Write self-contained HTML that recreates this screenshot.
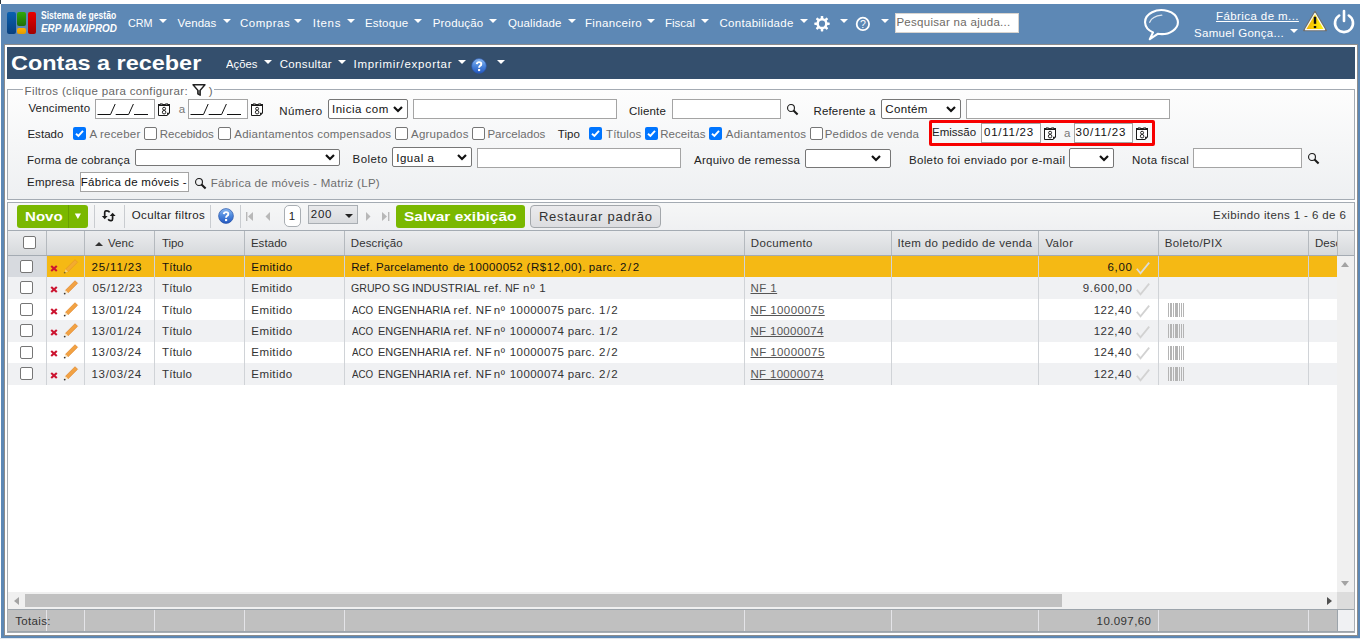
<!DOCTYPE html>
<html><head><meta charset="utf-8">
<style>
*{box-sizing:border-box}
html,body{margin:0;padding:0}
body{width:1360px;height:639px;overflow:hidden;position:relative;background:#fff;font-family:"Liberation Sans",sans-serif;font-size:12px;color:#222}
.a{position:absolute}
.t{position:absolute;white-space:nowrap}
.tri{position:absolute;width:0;height:0;border-left:4px solid transparent;border-right:4px solid transparent;border-top:4px solid #fff}
.inp{position:absolute;background:#fff;border:1px solid #a4a4a4}
.sel{position:absolute;background:#fff;border:1px solid #767676;border-radius:2px}
.cb{position:absolute;width:13px;height:13px;border:1px solid #767676;border-radius:2px;background:#fff}
.sep{position:absolute;width:1px;background:#c9ccd0}
</style></head><body>
<svg width="0" height="0" style="position:absolute"><defs>
<symbol id="cal" viewBox="0 0 12 13"><path d="M0.5 1.5 V12.5 H9.2 L11.5 10 V1.5" fill="#fff" stroke="#1a1a1a" stroke-width="1"/><rect x="0" y="1" width="12" height="2" fill="#1a1a1a"/><circle cx="3.4" cy="1" r="0.9" fill="#fff" stroke="#1a1a1a" stroke-width="0.8"/><circle cx="8.6" cy="1" r="0.9" fill="#fff" stroke="#1a1a1a" stroke-width="0.8"/><path d="M9 12.6 L9 9.8 L11.8 9.8 Z" fill="#1a1a1a"/><ellipse cx="6.1" cy="5.7" rx="1.5" ry="1.45" fill="none" stroke="#1a1a1a" stroke-width="0.95"/><ellipse cx="6.1" cy="9.2" rx="1.75" ry="1.75" fill="none" stroke="#1a1a1a" stroke-width="0.95"/></symbol>
<symbol id="mag" viewBox="0 0 12 12"><circle cx="4" cy="4" r="3.45" fill="none" stroke="#1a1a1a" stroke-width="1.1"/><line x1="6.5" y1="6.5" x2="10.6" y2="10.4" stroke="#1a1a1a" stroke-width="2.1"/></symbol>
<symbol id="chk" viewBox="0 0 13 13"><rect width="13" height="13" rx="2" fill="#0075ff"/><path d="M3 6.8 L5.4 9 L10 3.8" fill="none" stroke="#fff" stroke-width="1.9"/></symbol>
</defs></svg>
<div class="a" style="left:0;top:0;width:1px;height:4px;background:#2b3a44"></div>
<div class="a" style="left:1px;top:4px;width:1359px;height:635px;background:#5d88b5"></div>
<div class="a" style="left:0;top:638px;width:1360px;height:1px;background:#dfe6ee"></div>
<div class="a" style="left:7px;top:12px;width:8.7px;height:21.6px;border-radius:2px;background:linear-gradient(#0a60b0,#08407e)"></div>
<div class="a" style="left:17.1px;top:12px;width:8.7px;height:13.8px;border-radius:2px;background:linear-gradient(#30a80a,#1f6e08)"></div>
<div class="a" style="left:17.1px;top:27.7px;width:8.7px;height:5.9px;border-radius:2px;background:linear-gradient(#ffb000,#e09a00)"></div>
<div class="a" style="left:27.5px;top:12px;width:8.7px;height:21.6px;border-radius:2px;background:linear-gradient(#e80000,#a00000)"></div>
<div class="t" style="left:41.00px;top:9.00px;font-size:10.5px;line-height:13px;color:#fff;letter-spacing:0.000px;font-weight:700;transform:scaleX(0.8152);transform-origin:0 0">Sistema de gestão</div>
<div class="t" style="left:41.00px;top:20.90px;font-size:11.5px;line-height:14px;color:#fff;letter-spacing:0.000px;font-weight:700;font-style:italic;transform:scaleX(0.8580);transform-origin:0 0">ERP MAXIPROD</div>
<div class="t" style="left:128.46px;top:15.90px;font-size:11.5px;line-height:14px;color:#fff;letter-spacing:0.000px;transform:scaleX(0.9375);transform-origin:0 0">CRM</div>
<div class="tri" style="left:159px;top:19px"></div>
<div class="t" style="left:177.50px;top:15.90px;font-size:11.5px;line-height:14px;color:#fff;letter-spacing:0.100px">Vendas</div>
<div class="tri" style="left:222.5px;top:19px"></div>
<div class="t" style="left:240.00px;top:15.90px;font-size:11.5px;line-height:14px;color:#fff;letter-spacing:0.500px">Compras</div>
<div class="tri" style="left:294px;top:19px"></div>
<div class="t" style="left:312.75px;top:15.90px;font-size:11.5px;line-height:14px;color:#fff;letter-spacing:0.688px">Itens</div>
<div class="tri" style="left:347px;top:19px"></div>
<div class="t" style="left:365.00px;top:15.90px;font-size:11.5px;line-height:14px;color:#fff;letter-spacing:0.167px">Estoque</div>
<div class="tri" style="left:414px;top:19px"></div>
<div class="t" style="left:432.80px;top:15.90px;font-size:11.5px;line-height:14px;color:#fff;letter-spacing:0.157px">Produção</div>
<div class="tri" style="left:489px;top:19px"></div>
<div class="t" style="left:508.00px;top:15.90px;font-size:11.5px;line-height:14px;color:#fff;letter-spacing:0.125px">Qualidade</div>
<div class="tri" style="left:568px;top:19px"></div>
<div class="t" style="left:585.00px;top:15.90px;font-size:11.5px;line-height:14px;color:#fff;letter-spacing:0.333px">Financeiro</div>
<div class="tri" style="left:647px;top:19px"></div>
<div class="t" style="left:665.00px;top:15.90px;font-size:11.5px;line-height:14px;color:#fff;letter-spacing:0.000px">Fiscal</div>
<div class="tri" style="left:701px;top:19px"></div>
<div class="t" style="left:719.50px;top:15.90px;font-size:11.5px;line-height:14px;color:#fff;letter-spacing:0.292px">Contabilidade</div>
<div class="tri" style="left:800px;top:19px"></div>
<svg class="a" style="left:814px;top:16px" width="16" height="16" viewBox="0 0 16 16">
    <g fill="#fff"><circle cx="8" cy="7.7" r="5.6"/>
    <rect x="6.75" y="0" width="2.5" height="15.4" rx="0.6"/>
    <rect x="6.75" y="0" width="2.5" height="15.4" rx="0.6" transform="rotate(45 8 7.7)"/>
    <rect x="6.75" y="0" width="2.5" height="15.4" rx="0.6" transform="rotate(90 8 7.7)"/>
    <rect x="6.75" y="0" width="2.5" height="15.4" rx="0.6" transform="rotate(135 8 7.7)"/></g>
    <circle cx="8" cy="7.7" r="3.1" fill="#5d88b5"/></svg>
<div class="tri" style="left:840px;top:19px"></div>
<svg class="a" style="left:855px;top:16px" width="16" height="16" viewBox="0 0 16 16">
    <circle cx="7.9" cy="7.9" r="6.2" fill="none" stroke="#fff" stroke-width="1.8"/>
    <text x="7.9" y="11.8" font-size="10.5" font-family="Liberation Sans" text-anchor="middle" fill="#fff">?</text></svg>
<div class="tri" style="left:881px;top:19px"></div>
<div class="a" style="left:895px;top:13px;width:124px;height:20px;background:#fff;border:1px solid #d8d4cf"></div>
<div class="t" style="left:896.40px;top:15.40px;font-size:11.5px;line-height:14px;color:#6e6a66;letter-spacing:0.290px">Pesquisar na ajuda...</div>
<svg class="a" style="left:1142px;top:8px" width="40" height="34" viewBox="0 0 40 34">
    <path d="M11 24.4 L7.8 31.2 L15.7 25.8 A16.4 12 0 1 0 11 24.4 Z" fill="none" stroke="#fff" stroke-width="2.1" stroke-linejoin="round"/>
    <path d="M7.7 14.3 Q10 8.2 19.8 7.2" fill="none" stroke="#fff" stroke-width="1.3" stroke-linecap="round" opacity="0.8"/></svg>
<div class="t" style="left:1216.00px;top:8.90px;font-size:11.5px;line-height:14px;color:#fff;letter-spacing:0.414px;text-decoration:underline">Fábrica de m...</div>
<div class="t" style="left:1194.00px;top:25.50px;font-size:11.5px;line-height:14px;color:#fff;letter-spacing:0.286px">Samuel Gonça...</div>
<div class="tri" style="left:1290px;top:29px"></div>
<svg class="a" style="left:1302px;top:10px" width="26" height="22" viewBox="0 0 26 22">
    <defs><linearGradient id="wg" x1="0" y1="0" x2="1" y2="0"><stop offset="0" stop-color="#f2a900"/><stop offset="1" stop-color="#ffff10"/></linearGradient></defs>
    <path d="M13 1.6 L24.3 20.6 L1.7 20.6 Z" fill="url(#wg)" stroke="#6f6f6f" stroke-width="1.5" stroke-linejoin="round"/>
    <path d="M13 3.4 L22.6 19.6 L3.4 19.6 Z" fill="none" stroke="#fff" stroke-width="1.1" stroke-linejoin="round" opacity="0.9"/>
    <rect x="11.8" y="6.8" width="2.4" height="7" fill="#111"/>
    <rect x="11.8" y="16" width="2.4" height="2.1" fill="#111"/></svg>
<svg class="a" style="left:1332px;top:9px" width="24" height="25" viewBox="0 0 24 25">
    <path d="M7.2 6.5 A9 9 0 1 0 16.8 6.5" fill="none" stroke="#fff" stroke-width="2.6" stroke-linecap="round"/>
    <line x1="12" y1="2" x2="12" y2="12" stroke="#fff" stroke-width="2.6" stroke-linecap="round"/></svg>
<div class="a" style="left:4px;top:44px;width:1354px;height:592px;background:#fff;border:1px solid #8d8d8d"></div>
<div class="a" style="left:7px;top:47px;width:1348px;height:32px;background:#344f6d"></div>
<div class="t" style="left:11.18px;top:49.90px;font-size:21px;line-height:25px;color:#fff;letter-spacing:0.000px;font-weight:700;transform:scaleX(1.1166);transform-origin:0 0">Contas a receber</div>
<div class="t" style="left:226.20px;top:56.60px;font-size:11.5px;line-height:14px;color:#fff;letter-spacing:0.000px;transform:scaleX(0.9781);transform-origin:0 0">Ações</div>
<div class="tri" style="left:264px;top:60px"></div>
<div class="t" style="left:279.70px;top:56.60px;font-size:11.5px;line-height:14px;color:#fff;letter-spacing:0.337px">Consultar</div>
<div class="tri" style="left:338px;top:60px"></div>
<div class="t" style="left:353.60px;top:56.60px;font-size:11.5px;line-height:14px;color:#fff;letter-spacing:0.688px">Imprimir/exportar</div>
<div class="tri" style="left:458px;top:60px"></div>
<svg class="a" style="left:471px;top:58px" width="16" height="16" viewBox="0 0 16 16">
  <defs><linearGradient id="hb" x1="0" y1="0" x2="0" y2="1"><stop offset="0" stop-color="#8cbaf2"/><stop offset="0.5" stop-color="#4a86dc"/><stop offset="1" stop-color="#2458c0"/></linearGradient></defs>
  <circle cx="8" cy="8" r="7.4" fill="url(#hb)" stroke="#2a55a8" stroke-width="0.7"/>
  <path d="M5.8 6.1 Q5.9 4.1 8.1 4.1 Q10.3 4.1 10.3 5.9 Q10.3 7.2 9.1 7.8 Q8.1 8.4 8.1 9.8" fill="none" stroke="#fff" stroke-width="1.9"/>
  <rect x="7.05" y="11" width="2.1" height="2.1" fill="#fff"/></svg>
<div class="tri" style="left:497px;top:60px"></div>
<div class="a" style="left:7px;top:89px;width:1348px;height:111px;border:1px solid #a4abb3;background:linear-gradient(#fdfdfd,#eef0f2)"></div>
<div class="a" style="left:23px;top:84px;width:191px;height:12px;background:#fff"></div>
<div class="t" style="left:24.60px;top:83.70px;font-size:11.5px;line-height:14px;color:#666;letter-spacing:0.352px">Filtros (clique para configurar:</div>
<svg class="a" style="left:192px;top:84px" width="14" height="12" viewBox="0 0 14 12">
  <path d="M5.8 6.2 L8.2 6.2 L8.2 11.2 L5.8 10.2 Z" fill="#808080"/><path d="M1 0.8 L13 0.8 L8.2 6.2 L8.2 11.2 L5.8 9.8 L5.8 6.2 Z" fill="none" stroke="#222" stroke-width="1.4" stroke-linejoin="round"/></svg>
<div class="t" style="left:208.70px;top:83.70px;font-size:11.5px;line-height:14px;color:#666;letter-spacing:0.000px">)</div>
<div class="t" style="left:28.40px;top:101.40px;font-size:11.5px;line-height:14px;color:#222;letter-spacing:0.178px">Vencimento</div>
<div class="inp" style="left:95px;top:99px;width:60px;height:20px"></div>
<svg class="a" style="left:97.0px;top:103px" width="52" height="13" viewBox="0 0 52 13"><path d="M0.5 11.5 H13.5 L18.2 1 M18.7 11.5 H31.6 L36.4 1 M37 11.5 H51" fill="none" stroke="#111" stroke-width="1"/></svg>
<svg class="a" style="left:158px;top:103px" width="12" height="13"><use href="#cal"/></svg>
<div class="t" style="left:178.80px;top:102.00px;font-size:11.5px;line-height:14px;color:#777;letter-spacing:0.000px">a</div>
<div class="inp" style="left:188px;top:99px;width:60px;height:20px"></div>
<svg class="a" style="left:190.0px;top:103px" width="52" height="13" viewBox="0 0 52 13"><path d="M0.5 11.5 H13.5 L18.2 1 M18.7 11.5 H31.6 L36.4 1 M37 11.5 H51" fill="none" stroke="#111" stroke-width="1"/></svg>
<svg class="a" style="left:251px;top:103px" width="12" height="13"><use href="#cal"/></svg>
<div class="t" style="left:279.30px;top:104.40px;font-size:11.5px;line-height:14px;color:#222;letter-spacing:0.380px">Número</div>
<div class="sel" style="left:328px;top:99px;width:80px;height:20px"></div>
<svg class="a" style="left:393px;top:106px" width="10" height="7" viewBox="0 0 10 7"><path d="M1 1 L5 5 L9 1" fill="none" stroke="#111" stroke-width="2.2"/></svg>
<div class="t" style="left:332.00px;top:101.90px;font-size:11.5px;line-height:14px;color:#111;letter-spacing:0.500px">Inicia com</div>
<div class="inp" style="left:413px;top:99px;width:204px;height:20px"></div>
<div class="t" style="left:629.00px;top:104.40px;font-size:11.5px;line-height:14px;color:#222;letter-spacing:0.167px">Cliente</div>
<div class="inp" style="left:672px;top:99px;width:109px;height:20px"></div>
<svg class="a" style="left:787px;top:104px" width="12" height="12"><use href="#mag"/></svg>
<div class="t" style="left:813.40px;top:104.40px;font-size:11.5px;line-height:14px;color:#222;letter-spacing:0.190px">Referente a</div>
<div class="sel" style="left:881px;top:99px;width:80px;height:20px"></div>
<svg class="a" style="left:946px;top:106px" width="10" height="7" viewBox="0 0 10 7"><path d="M1 1 L5 5 L9 1" fill="none" stroke="#111" stroke-width="2.2"/></svg>
<div class="t" style="left:885.30px;top:101.90px;font-size:11.5px;line-height:14px;color:#111;letter-spacing:0.340px">Contém</div>
<div class="inp" style="left:966px;top:99px;width:204px;height:20px"></div>
<div class="t" style="left:27.40px;top:126.60px;font-size:11.5px;line-height:14px;color:#222;letter-spacing:0.040px">Estado</div>
<svg class="a" style="left:73px;top:127px" width="13" height="13"><use href="#chk"/></svg>
<div class="t" style="left:89.40px;top:126.60px;font-size:11.5px;line-height:14px;color:#6d6d6d;letter-spacing:0.200px">A receber</div>
<div class="cb" style="left:144px;top:127px"></div>
<div class="t" style="left:159.80px;top:126.60px;font-size:11.5px;line-height:14px;color:#6d6d6d;letter-spacing:-0.038px">Recebidos</div>
<div class="cb" style="left:218px;top:127px"></div>
<div class="t" style="left:234.30px;top:126.60px;font-size:11.5px;line-height:14px;color:#6d6d6d;letter-spacing:0.217px">Adiantamentos compensados</div>
<div class="cb" style="left:395px;top:127px"></div>
<div class="t" style="left:411.00px;top:126.60px;font-size:11.5px;line-height:14px;color:#6d6d6d;letter-spacing:0.225px">Agrupados</div>
<div class="cb" style="left:472px;top:127px"></div>
<div class="t" style="left:487.40px;top:126.60px;font-size:11.5px;line-height:14px;color:#6d6d6d;letter-spacing:0.044px">Parcelados</div>
<div class="t" style="left:557.80px;top:126.60px;font-size:11.5px;line-height:14px;color:#222;letter-spacing:0.067px">Tipo</div>
<svg class="a" style="left:589px;top:127px" width="13" height="13"><use href="#chk"/></svg>
<div class="t" style="left:606.00px;top:126.60px;font-size:11.5px;line-height:14px;color:#6d6d6d;letter-spacing:0.133px">Títulos</div>
<svg class="a" style="left:645px;top:127px" width="13" height="13"><use href="#chk"/></svg>
<div class="t" style="left:660.20px;top:126.60px;font-size:11.5px;line-height:14px;color:#6d6d6d;letter-spacing:0.071px">Receitas</div>
<svg class="a" style="left:709px;top:127px" width="13" height="13"><use href="#chk"/></svg>
<div class="t" style="left:725.70px;top:126.60px;font-size:11.5px;line-height:14px;color:#6d6d6d;letter-spacing:0.308px">Adiantamentos</div>
<div class="cb" style="left:810px;top:127px"></div>
<div class="t" style="left:824.80px;top:126.60px;font-size:11.5px;line-height:14px;color:#6d6d6d;letter-spacing:0.133px">Pedidos de venda</div>
<div class="a" style="left:929px;top:120px;width:226px;height:26px;border:3px solid #f70000;border-radius:2px"></div>
<div class="t" style="left:932.00px;top:125.10px;font-size:11.5px;line-height:14px;color:#222;letter-spacing:0.000px">Emissão</div>
<div class="inp" style="left:981px;top:123px;width:60px;height:20px"></div>
<div class="t" style="left:984.00px;top:125.30px;font-size:11.5px;line-height:14px;color:#111;letter-spacing:0.743px">01/11/23</div>
<svg class="a" style="left:1044px;top:127px" width="12" height="13"><use href="#cal"/></svg>
<div class="t" style="left:1064.00px;top:126.00px;font-size:11.5px;line-height:14px;color:#777;letter-spacing:0.000px">a</div>
<div class="inp" style="left:1074px;top:123px;width:59px;height:20px"></div>
<div class="t" style="left:1075.60px;top:125.30px;font-size:11.5px;line-height:14px;color:#111;letter-spacing:0.857px">30/11/23</div>
<svg class="a" style="left:1136px;top:127px" width="12" height="13"><use href="#cal"/></svg>
<div class="t" style="left:27.10px;top:153.00px;font-size:11.5px;line-height:14px;color:#222;letter-spacing:0.188px">Forma de cobrança</div>
<div class="sel" style="left:135px;top:149px;width:205px;height:17px"></div>
<svg class="a" style="left:325px;top:154px" width="10" height="7" viewBox="0 0 10 7"><path d="M1 1 L5 5 L9 1" fill="none" stroke="#111" stroke-width="2.2"/></svg>
<div class="t" style="left:352.60px;top:152.10px;font-size:11.5px;line-height:14px;color:#222;letter-spacing:0.440px">Boleto</div>
<div class="sel" style="left:392px;top:147px;width:80px;height:20px"></div>
<svg class="a" style="left:457px;top:154px" width="10" height="7" viewBox="0 0 10 7"><path d="M1 1 L5 5 L9 1" fill="none" stroke="#111" stroke-width="2.2"/></svg>
<div class="t" style="left:396.20px;top:150.90px;font-size:11.5px;line-height:14px;color:#111;letter-spacing:0.517px">Igual a</div>
<div class="inp" style="left:477px;top:148px;width:204px;height:20px"></div>
<div class="t" style="left:694.10px;top:153.00px;font-size:11.5px;line-height:14px;color:#222;letter-spacing:0.212px">Arquivo de remessa</div>
<div class="sel" style="left:805px;top:149px;width:86px;height:19px"></div>
<svg class="a" style="left:871px;top:155px" width="10" height="7" viewBox="0 0 10 7"><path d="M1 1 L5 5 L9 1" fill="none" stroke="#111" stroke-width="2.2"/></svg>
<div class="t" style="left:908.90px;top:153.00px;font-size:11.5px;line-height:14px;color:#222;letter-spacing:0.368px">Boleto foi enviado por e-mail</div>
<div class="sel" style="left:1069px;top:148px;width:45px;height:20px"></div>
<svg class="a" style="left:1099px;top:155px" width="10" height="7" viewBox="0 0 10 7"><path d="M1 1 L5 5 L9 1" fill="none" stroke="#111" stroke-width="2.2"/></svg>
<div class="t" style="left:1132.00px;top:153.00px;font-size:11.5px;line-height:14px;color:#222;letter-spacing:0.320px">Nota fiscal</div>
<div class="inp" style="left:1193px;top:148px;width:109px;height:20px"></div>
<svg class="a" style="left:1308px;top:153px" width="12" height="12"><use href="#mag"/></svg>
<div class="t" style="left:27.00px;top:175.20px;font-size:11.5px;line-height:14px;color:#222;letter-spacing:0.233px">Empresa</div>
<div class="inp" style="left:80px;top:172px;width:109px;height:20px"></div>
<div class="t" style="left:80.80px;top:175.20px;font-size:11.5px;line-height:14px;color:#111;letter-spacing:0.272px">Fábrica de móveis -</div>
<svg class="a" style="left:195px;top:177.6px" width="12" height="12"><use href="#mag"/></svg>
<div class="t" style="left:210.80px;top:175.70px;font-size:11.5px;line-height:14px;color:#6d6d6d;letter-spacing:0.283px">Fábrica de móveis - Matriz (LP)</div>
<div class="a" style="left:7px;top:202px;width:1348px;height:29px;border:1px solid #a4abb3;background:linear-gradient(#f6f7f7,#eff0f2)"></div>
<div class="a" style="left:17px;top:205px;width:71px;height:23px;border-radius:3px;background:#7ab800"></div>
<div class="a" style="left:68px;top:205px;width:1px;height:23px;background:#6a9f00"></div>
<div class="t" style="left:25.24px;top:209.60px;font-size:12px;line-height:14px;color:#fff;letter-spacing:0.000px;font-weight:700;transform:scaleX(1.2552);transform-origin:0 0">Novo</div>
<svg class="a" style="left:74px;top:213px" width="8" height="7" viewBox="0 0 8 7"><path d="M0.8 0.5 H7 L3.9 6 Z" fill="#fff"/></svg>
<div class="sep" style="left:94px;top:205px;height:23px"></div>
<svg class="a" style="left:98px;top:206px" width="22" height="20" viewBox="0 0 22 20">
  <path d="M11.6 6.4 Q10.8 4.9 9 4.9 L7.8 4.9 Q6.7 5 6.7 6.6 L6.7 10.5" fill="none" stroke="#1a1a1a" stroke-width="1.7"/>
  <path d="M3.9 10 L9.6 10 L6.75 13.2 Z" fill="#1a1a1a"/>
  <path d="M10.2 13.3 Q11 14.6 12.6 14.6 L13.4 14.6 Q14.6 14.5 14.6 12.8 L14.6 9.2" fill="none" stroke="#1a1a1a" stroke-width="1.7"/>
  <path d="M11.7 10 L17.6 10 L14.65 6.8 Z" fill="#1a1a1a"/></svg>
<div class="sep" style="left:124px;top:205px;height:23px"></div>
<div class="t" style="left:131.70px;top:208.00px;font-size:11.5px;line-height:14px;color:#222;letter-spacing:0.379px">Ocultar filtros</div>
<div class="sep" style="left:210px;top:205px;height:23px"></div>
<svg class="a" style="left:218px;top:208px" width="16" height="16" viewBox="0 0 16 16">
  <circle cx="8" cy="8" r="7.4" fill="url(#hb)" stroke="#2a55a8" stroke-width="0.7"/>
  <path d="M5.8 6.1 Q5.9 4.1 8.1 4.1 Q10.3 4.1 10.3 5.9 Q10.3 7.2 9.1 7.8 Q8.1 8.4 8.1 9.8" fill="none" stroke="#fff" stroke-width="1.9"/>
  <rect x="7.05" y="11" width="2.1" height="2.1" fill="#fff"/></svg>
<div class="sep" style="left:240px;top:205px;height:23px"></div>
<svg class="a" style="left:246px;top:212px" width="8" height="9" viewBox="0 0 8 9"><rect x="0" y="0" width="1.4" height="9" fill="#b8b8b8"/><path d="M7 0 L2 4.5 L7 9 Z" fill="#b8b8b8"/></svg>
<svg class="a" style="left:265px;top:212px" width="6" height="9" viewBox="0 0 6 9"><path d="M5 0 L0.5 4.5 L5 9 Z" fill="#b8b8b8"/></svg>
<div class="a" style="left:284px;top:205px;width:17px;height:22px;border:1px solid #a9aeb3;border-radius:5px;background:#fff"></div>
<div class="t" style="left:288.70px;top:208.90px;font-size:11.5px;line-height:14px;color:#222;letter-spacing:0.000px">1</div>
<div class="a" style="left:308px;top:205px;width:50px;height:19px;border:1px solid #a9aeb3;background:linear-gradient(#e9eaec,#d9dbde)"></div>
<div class="t" style="left:310.80px;top:207.00px;font-size:11.5px;line-height:14px;color:#222;letter-spacing:0.700px">200</div>
<div class="a" style="left:345px;top:214px;width:0;height:0;border-left:4px solid transparent;border-right:4px solid transparent;border-top:4px solid #222"></div>
<svg class="a" style="left:365px;top:212px" width="6" height="9" viewBox="0 0 6 9"><path d="M1 0 L5.5 4.5 L1 9 Z" fill="#b8b8b8"/></svg>
<svg class="a" style="left:382px;top:212px" width="8" height="9" viewBox="0 0 8 9"><path d="M0 0 L5 4.5 L0 9 Z" fill="#b8b8b8"/><rect x="6" y="0" width="1.4" height="9" fill="#b8b8b8"/></svg>
<div class="a" style="left:396px;top:205px;width:129px;height:23px;border-radius:3px;background:#7ab800"></div>
<div class="t" style="left:403.56px;top:209.60px;font-size:12.5px;line-height:15px;color:#fff;letter-spacing:0.000px;font-weight:700;transform:scaleX(1.2356);transform-origin:0 0">Salvar exibição</div>
<div class="a" style="left:530px;top:205px;width:131px;height:23px;border:1px solid #a3a7ab;border-radius:4px;background:linear-gradient(#ebebed,#dcdde0)"></div>
<div class="t" style="left:538.90px;top:209.00px;font-size:13px;line-height:16px;color:#333;letter-spacing:0.793px">Restaurar padrão</div>
<div class="t" style="left:1213.10px;top:207.50px;font-size:11.5px;line-height:14px;color:#333;letter-spacing:0.388px">Exibindo itens 1 - 6 de 6</div>
<div class="a" style="left:7px;top:231px;width:1348px;height:402px;border:1px solid #a9aeb3;border-top:0;background:#fff"></div>
<div class="a" style="left:8px;top:231px;width:1346px;height:25px;background:linear-gradient(#ebecee,#d6d9dc);border-bottom:1px solid #a4abb3"></div>
<div class="a" style="left:46px;top:231px;width:1px;height:24px;background:#b4b9be"></div>
<div class="a" style="left:84px;top:231px;width:1px;height:24px;background:#b4b9be"></div>
<div class="a" style="left:154px;top:231px;width:1px;height:24px;background:#b4b9be"></div>
<div class="a" style="left:244px;top:231px;width:1px;height:24px;background:#b4b9be"></div>
<div class="a" style="left:344px;top:231px;width:1px;height:24px;background:#b4b9be"></div>
<div class="a" style="left:744px;top:231px;width:1px;height:24px;background:#b4b9be"></div>
<div class="a" style="left:891px;top:231px;width:1px;height:24px;background:#b4b9be"></div>
<div class="a" style="left:1038px;top:231px;width:1px;height:24px;background:#b4b9be"></div>
<div class="a" style="left:1158px;top:231px;width:1px;height:24px;background:#b4b9be"></div>
<div class="a" style="left:1308px;top:231px;width:1px;height:24px;background:#b4b9be"></div>
<div class="a" style="left:1337px;top:231px;width:1px;height:24px;background:#b4b9be"></div>
<div class="cb" style="left:23px;top:236px"></div>
<div class="a" style="left:95px;top:242px;width:0;height:0;border-left:4px solid transparent;border-right:4px solid transparent;border-bottom:4px solid #333"></div>
<div class="t" style="left:108.00px;top:235.80px;font-size:11.5px;line-height:14px;color:#333;letter-spacing:0.067px">Venc</div>
<div class="t" style="left:162.10px;top:235.80px;font-size:11.5px;line-height:14px;color:#333;letter-spacing:-0.100px">Tipo</div>
<div class="t" style="left:250.90px;top:235.80px;font-size:11.5px;line-height:14px;color:#333;letter-spacing:0.060px">Estado</div>
<div class="t" style="left:350.80px;top:235.80px;font-size:11.5px;line-height:14px;color:#333;letter-spacing:0.100px">Descrição</div>
<div class="t" style="left:750.80px;top:235.80px;font-size:11.5px;line-height:14px;color:#333;letter-spacing:0.338px">Documento</div>
<div class="t" style="left:897.50px;top:235.80px;font-size:11.5px;line-height:14px;color:#333;letter-spacing:0.355px">Item do pedido de venda</div>
<div class="t" style="left:1045.40px;top:235.80px;font-size:11.5px;line-height:14px;color:#333;letter-spacing:0.400px">Valor</div>
<div class="t" style="left:1164.70px;top:235.80px;font-size:11.5px;line-height:14px;color:#333;letter-spacing:0.356px">Boleto/PIX</div>
<div class="a" style="left:1309px;top:231px;width:28px;height:24px;overflow:hidden"><div class="t" style="left:6.00px;top:4.80px;font-size:11.5px;line-height:14px;color:#333;letter-spacing:0.000px">Descrição</div></div>
<div class="a" style="left:8px;top:256px;width:38px;height:21px;background:#d7dadf"></div>
<div class="a" style="left:47px;top:256px;width:1290px;height:21px;background:#f5b914"></div>
<div class="a" style="left:46px;top:256px;width:1px;height:21px;background:#d0d3d7"></div>
<div class="a" style="left:84px;top:256px;width:1px;height:21px;background:#d0d3d7"></div>
<div class="a" style="left:154px;top:256px;width:1px;height:21px;background:#d0d3d7"></div>
<div class="a" style="left:244px;top:256px;width:1px;height:21px;background:#d0d3d7"></div>
<div class="a" style="left:344px;top:256px;width:1px;height:21px;background:#d0d3d7"></div>
<div class="a" style="left:744px;top:256px;width:1px;height:21px;background:#d0d3d7"></div>
<div class="a" style="left:891px;top:256px;width:1px;height:21px;background:#d0d3d7"></div>
<div class="a" style="left:1038px;top:256px;width:1px;height:21px;background:#d0d3d7"></div>
<div class="a" style="left:1158px;top:256px;width:1px;height:21px;background:#d0d3d7"></div>
<div class="a" style="left:1308px;top:256px;width:1px;height:21px;background:#d0d3d7"></div>
<div class="cb" style="left:20px;top:260px"></div>
<svg class="a" style="left:50px;top:265px" width="8" height="7" viewBox="0 0 8 7"><path d="M1.2 0.9 L6.8 6.1 M6.8 0.9 L1.2 6.1" stroke="#cc1531" stroke-width="2.1"/></svg>
<svg class="a" style="left:62px;top:259px;opacity:0.6" width="17" height="15" viewBox="0 0 17 15"><path d="M6.03 12.81 L15.57 3.27 L13.03 0.73 L3.49 10.27 Z" fill="#f2a243" stroke="#e0852a" stroke-width="0.7"/><path d="M2.5 13.8 L6.03 12.81 L3.49 10.27 Z" fill="#f8e6c6"/><circle cx="2.7" cy="13.6" r="0.9" fill="#333"/></svg>
<div class="t" style="left:91.50px;top:260.00px;font-size:11.5px;line-height:14px;color:#111;letter-spacing:0.843px">25/11/23</div>
<div class="t" style="left:162.00px;top:260.00px;font-size:11.5px;line-height:14px;color:#111;letter-spacing:0.220px">Título</div>
<div class="t" style="left:251.30px;top:260.00px;font-size:11.5px;line-height:14px;color:#111;letter-spacing:0.417px">Emitido</div>
<div class="t" style="left:351.20px;top:260.00px;font-size:11.5px;line-height:14px;color:#111;letter-spacing:0.100px">Ref.</div>
<div class="t" style="left:376.00px;top:260.00px;font-size:11.5px;line-height:14px;color:#111;letter-spacing:0.100px">Parcelamento</div>
<div class="t" style="left:452.50px;top:260.00px;font-size:11.5px;line-height:14px;color:#111;letter-spacing:0.000px;transform:scaleX(0.9385);transform-origin:0 0">de</div>
<div class="t" style="left:468.60px;top:260.00px;font-size:11.5px;line-height:14px;color:#111;letter-spacing:0.414px">10000052</div>
<div class="t" style="left:526.60px;top:260.00px;font-size:11.5px;line-height:14px;color:#111;letter-spacing:0.511px">(R$12,00).</div>
<div class="t" style="left:588.80px;top:260.00px;font-size:11.5px;line-height:14px;color:#111;letter-spacing:0.400px">parc.</div>
<div class="t" style="left:619.90px;top:260.00px;font-size:11.5px;line-height:14px;color:#111;letter-spacing:1.600px">2/2</div>
<div class="t" style="left:1107.50px;top:260.00px;font-size:11.5px;line-height:14px;color:#111;letter-spacing:0.667px">6,00</div>
<svg class="a" style="left:1136px;top:262px" width="14" height="13" viewBox="0 0 14 13"><path d="M0.8 6.8 L4.5 11.4 L13.2 0.6" fill="none" stroke="#dcdcd8" stroke-width="1.8"/></svg>
<div class="a" style="left:8px;top:277px;width:38px;height:22px;background:#f0f1f3"></div>
<div class="a" style="left:47px;top:277px;width:1290px;height:22px;background:#f0f1f3"></div>
<div class="a" style="left:46px;top:277px;width:1px;height:22px;background:#d0d3d7"></div>
<div class="a" style="left:84px;top:277px;width:1px;height:22px;background:#d0d3d7"></div>
<div class="a" style="left:154px;top:277px;width:1px;height:22px;background:#d0d3d7"></div>
<div class="a" style="left:244px;top:277px;width:1px;height:22px;background:#d0d3d7"></div>
<div class="a" style="left:344px;top:277px;width:1px;height:22px;background:#d0d3d7"></div>
<div class="a" style="left:744px;top:277px;width:1px;height:22px;background:#d0d3d7"></div>
<div class="a" style="left:891px;top:277px;width:1px;height:22px;background:#d0d3d7"></div>
<div class="a" style="left:1038px;top:277px;width:1px;height:22px;background:#d0d3d7"></div>
<div class="a" style="left:1158px;top:277px;width:1px;height:22px;background:#d0d3d7"></div>
<div class="a" style="left:1308px;top:277px;width:1px;height:22px;background:#d0d3d7"></div>
<div class="cb" style="left:20px;top:281px"></div>
<svg class="a" style="left:50px;top:286px" width="8" height="7" viewBox="0 0 8 7"><path d="M1.2 0.9 L6.8 6.1 M6.8 0.9 L1.2 6.1" stroke="#cc1531" stroke-width="2.1"/></svg>
<svg class="a" style="left:62px;top:280px;opacity:1" width="17" height="15" viewBox="0 0 17 15"><path d="M6.03 12.81 L15.57 3.27 L13.03 0.73 L3.49 10.27 Z" fill="#f2a243" stroke="#e0852a" stroke-width="0.7"/><path d="M2.5 13.8 L6.03 12.81 L3.49 10.27 Z" fill="#f8e6c6"/><circle cx="2.7" cy="13.6" r="0.9" fill="#333"/></svg>
<div class="t" style="left:92.50px;top:281.00px;font-size:11.5px;line-height:14px;color:#333;letter-spacing:0.700px">05/12/23</div>
<div class="t" style="left:162.00px;top:281.00px;font-size:11.5px;line-height:14px;color:#333;letter-spacing:0.220px">Título</div>
<div class="t" style="left:251.30px;top:281.00px;font-size:11.5px;line-height:14px;color:#333;letter-spacing:0.417px">Emitido</div>
<div class="t" style="left:351.08px;top:281.00px;font-size:11.5px;line-height:14px;color:#333;letter-spacing:0.000px;transform:scaleX(0.9220);transform-origin:0 0">GRUPO</div>
<div class="t" style="left:392.60px;top:281.00px;font-size:11.5px;line-height:14px;color:#333;letter-spacing:0.500px">SG</div>
<div class="t" style="left:412.00px;top:281.00px;font-size:11.5px;line-height:14px;color:#333;letter-spacing:0.011px">INDUSTRIAL</div>
<div class="t" style="left:483.70px;top:281.00px;font-size:11.5px;line-height:14px;color:#333;letter-spacing:0.433px">ref.</div>
<div class="t" style="left:505.46px;top:281.00px;font-size:11.5px;line-height:14px;color:#333;letter-spacing:0.000px;transform:scaleX(0.9357);transform-origin:0 0">NF</div>
<div class="t" style="left:523.10px;top:281.00px;font-size:11.5px;line-height:14px;color:#333;letter-spacing:0.900px">nº</div>
<div class="t" style="left:539.30px;top:281.00px;font-size:11.5px;line-height:14px;color:#333;letter-spacing:0.000px">1</div>
<div class="t" style="left:750.50px;top:281.00px;font-size:11.5px;line-height:14px;color:#555;letter-spacing:0.433px;text-decoration:underline">NF 1</div>
<div class="t" style="left:1082.80px;top:281.00px;font-size:11.5px;line-height:14px;color:#333;letter-spacing:0.629px">9.600,00</div>
<svg class="a" style="left:1136px;top:283px" width="14" height="13" viewBox="0 0 14 13"><path d="M0.8 6.8 L4.5 11.4 L13.2 0.6" fill="none" stroke="#d2d2d2" stroke-width="1.8"/></svg>
<div class="a" style="left:8px;top:299px;width:38px;height:21px;background:#ffffff"></div>
<div class="a" style="left:47px;top:299px;width:1290px;height:21px;background:#ffffff"></div>
<div class="a" style="left:46px;top:299px;width:1px;height:21px;background:#d0d3d7"></div>
<div class="a" style="left:84px;top:299px;width:1px;height:21px;background:#d0d3d7"></div>
<div class="a" style="left:154px;top:299px;width:1px;height:21px;background:#d0d3d7"></div>
<div class="a" style="left:244px;top:299px;width:1px;height:21px;background:#d0d3d7"></div>
<div class="a" style="left:344px;top:299px;width:1px;height:21px;background:#d0d3d7"></div>
<div class="a" style="left:744px;top:299px;width:1px;height:21px;background:#d0d3d7"></div>
<div class="a" style="left:891px;top:299px;width:1px;height:21px;background:#d0d3d7"></div>
<div class="a" style="left:1038px;top:299px;width:1px;height:21px;background:#d0d3d7"></div>
<div class="a" style="left:1158px;top:299px;width:1px;height:21px;background:#d0d3d7"></div>
<div class="a" style="left:1308px;top:299px;width:1px;height:21px;background:#d0d3d7"></div>
<div class="cb" style="left:20px;top:303px"></div>
<svg class="a" style="left:50px;top:308px" width="8" height="7" viewBox="0 0 8 7"><path d="M1.2 0.9 L6.8 6.1 M6.8 0.9 L1.2 6.1" stroke="#cc1531" stroke-width="2.1"/></svg>
<svg class="a" style="left:62px;top:302px;opacity:1" width="17" height="15" viewBox="0 0 17 15"><path d="M6.03 12.81 L15.57 3.27 L13.03 0.73 L3.49 10.27 Z" fill="#f2a243" stroke="#e0852a" stroke-width="0.7"/><path d="M2.5 13.8 L6.03 12.81 L3.49 10.27 Z" fill="#f8e6c6"/><circle cx="2.7" cy="13.6" r="0.9" fill="#333"/></svg>
<div class="t" style="left:91.50px;top:303.00px;font-size:11.5px;line-height:14px;color:#333;letter-spacing:0.700px">13/01/24</div>
<div class="t" style="left:162.00px;top:303.00px;font-size:11.5px;line-height:14px;color:#333;letter-spacing:0.220px">Título</div>
<div class="t" style="left:251.30px;top:303.00px;font-size:11.5px;line-height:14px;color:#333;letter-spacing:0.417px">Emitido</div>
<div class="t" style="left:352.00px;top:303.00px;font-size:11.5px;line-height:14px;color:#333;letter-spacing:0.000px;transform:scaleX(0.8520);transform-origin:0 0">ACO</div>
<div class="t" style="left:378.05px;top:303.00px;font-size:11.5px;line-height:14px;color:#333;letter-spacing:0.000px;transform:scaleX(0.9533);transform-origin:0 0">ENGENHARIA</div>
<div class="t" style="left:453.60px;top:303.00px;font-size:11.5px;line-height:14px;color:#333;letter-spacing:0.500px">ref.</div>
<div class="t" style="left:475.80px;top:303.00px;font-size:11.5px;line-height:14px;color:#333;letter-spacing:0.400px">NF</div>
<div class="t" style="left:493.70px;top:303.00px;font-size:11.5px;line-height:14px;color:#333;letter-spacing:0.600px">nº</div>
<div class="t" style="left:509.80px;top:303.00px;font-size:11.5px;line-height:14px;color:#333;letter-spacing:0.429px">10000075</div>
<div class="t" style="left:567.80px;top:303.00px;font-size:11.5px;line-height:14px;color:#333;letter-spacing:0.325px">parc.</div>
<div class="t" style="left:599.00px;top:303.00px;font-size:11.5px;line-height:14px;color:#333;letter-spacing:1.350px">1/2</div>
<div class="t" style="left:750.50px;top:303.00px;font-size:11.5px;line-height:14px;color:#555;letter-spacing:0.410px;text-decoration:underline">NF 10000075</div>
<div class="t" style="left:1093.70px;top:303.00px;font-size:11.5px;line-height:14px;color:#333;letter-spacing:0.500px">122,40</div>
<svg class="a" style="left:1136px;top:305px" width="14" height="13" viewBox="0 0 14 13"><path d="M0.8 6.8 L4.5 11.4 L13.2 0.6" fill="none" stroke="#d2d2d2" stroke-width="1.8"/></svg>
<svg class="a" style="left:1168px;top:303px" width="16" height="14"><rect x="0" y="0" width="1" height="14" fill="#b4b4b4"/><rect x="2" y="0" width="2" height="14" fill="#b4b4b4"/><rect x="5" y="0" width="1" height="14" fill="#b4b4b4"/><rect x="7" y="0" width="3" height="14" fill="#b4b4b4"/><rect x="11" y="0" width="1" height="14" fill="#b4b4b4"/><rect x="13" y="0" width="1" height="14" fill="#b4b4b4"/><rect x="15" y="0" width="1" height="14" fill="#b4b4b4"/></svg>
<div class="a" style="left:8px;top:320px;width:38px;height:22px;background:#f0f1f3"></div>
<div class="a" style="left:47px;top:320px;width:1290px;height:22px;background:#f0f1f3"></div>
<div class="a" style="left:46px;top:320px;width:1px;height:22px;background:#d0d3d7"></div>
<div class="a" style="left:84px;top:320px;width:1px;height:22px;background:#d0d3d7"></div>
<div class="a" style="left:154px;top:320px;width:1px;height:22px;background:#d0d3d7"></div>
<div class="a" style="left:244px;top:320px;width:1px;height:22px;background:#d0d3d7"></div>
<div class="a" style="left:344px;top:320px;width:1px;height:22px;background:#d0d3d7"></div>
<div class="a" style="left:744px;top:320px;width:1px;height:22px;background:#d0d3d7"></div>
<div class="a" style="left:891px;top:320px;width:1px;height:22px;background:#d0d3d7"></div>
<div class="a" style="left:1038px;top:320px;width:1px;height:22px;background:#d0d3d7"></div>
<div class="a" style="left:1158px;top:320px;width:1px;height:22px;background:#d0d3d7"></div>
<div class="a" style="left:1308px;top:320px;width:1px;height:22px;background:#d0d3d7"></div>
<div class="cb" style="left:20px;top:324px"></div>
<svg class="a" style="left:50px;top:329px" width="8" height="7" viewBox="0 0 8 7"><path d="M1.2 0.9 L6.8 6.1 M6.8 0.9 L1.2 6.1" stroke="#cc1531" stroke-width="2.1"/></svg>
<svg class="a" style="left:62px;top:323px;opacity:1" width="17" height="15" viewBox="0 0 17 15"><path d="M6.03 12.81 L15.57 3.27 L13.03 0.73 L3.49 10.27 Z" fill="#f2a243" stroke="#e0852a" stroke-width="0.7"/><path d="M2.5 13.8 L6.03 12.81 L3.49 10.27 Z" fill="#f8e6c6"/><circle cx="2.7" cy="13.6" r="0.9" fill="#333"/></svg>
<div class="t" style="left:91.50px;top:324.00px;font-size:11.5px;line-height:14px;color:#333;letter-spacing:0.700px">13/01/24</div>
<div class="t" style="left:162.00px;top:324.00px;font-size:11.5px;line-height:14px;color:#333;letter-spacing:0.220px">Título</div>
<div class="t" style="left:251.30px;top:324.00px;font-size:11.5px;line-height:14px;color:#333;letter-spacing:0.417px">Emitido</div>
<div class="t" style="left:352.00px;top:324.00px;font-size:11.5px;line-height:14px;color:#333;letter-spacing:0.000px;transform:scaleX(0.8520);transform-origin:0 0">ACO</div>
<div class="t" style="left:378.05px;top:324.00px;font-size:11.5px;line-height:14px;color:#333;letter-spacing:0.000px;transform:scaleX(0.9533);transform-origin:0 0">ENGENHARIA</div>
<div class="t" style="left:453.60px;top:324.00px;font-size:11.5px;line-height:14px;color:#333;letter-spacing:0.500px">ref.</div>
<div class="t" style="left:475.80px;top:324.00px;font-size:11.5px;line-height:14px;color:#333;letter-spacing:0.400px">NF</div>
<div class="t" style="left:493.70px;top:324.00px;font-size:11.5px;line-height:14px;color:#333;letter-spacing:0.600px">nº</div>
<div class="t" style="left:509.80px;top:324.00px;font-size:11.5px;line-height:14px;color:#333;letter-spacing:0.429px">10000074</div>
<div class="t" style="left:567.80px;top:324.00px;font-size:11.5px;line-height:14px;color:#333;letter-spacing:0.325px">parc.</div>
<div class="t" style="left:599.00px;top:324.00px;font-size:11.5px;line-height:14px;color:#333;letter-spacing:1.350px">1/2</div>
<div class="t" style="left:750.50px;top:324.00px;font-size:11.5px;line-height:14px;color:#555;letter-spacing:0.310px;text-decoration:underline">NF 10000074</div>
<div class="t" style="left:1093.70px;top:324.00px;font-size:11.5px;line-height:14px;color:#333;letter-spacing:0.500px">122,40</div>
<svg class="a" style="left:1136px;top:326px" width="14" height="13" viewBox="0 0 14 13"><path d="M0.8 6.8 L4.5 11.4 L13.2 0.6" fill="none" stroke="#d2d2d2" stroke-width="1.8"/></svg>
<svg class="a" style="left:1168px;top:324px" width="16" height="14"><rect x="0" y="0" width="1" height="14" fill="#b4b4b4"/><rect x="2" y="0" width="2" height="14" fill="#b4b4b4"/><rect x="5" y="0" width="1" height="14" fill="#b4b4b4"/><rect x="7" y="0" width="3" height="14" fill="#b4b4b4"/><rect x="11" y="0" width="1" height="14" fill="#b4b4b4"/><rect x="13" y="0" width="1" height="14" fill="#b4b4b4"/><rect x="15" y="0" width="1" height="14" fill="#b4b4b4"/></svg>
<div class="a" style="left:8px;top:342px;width:38px;height:21px;background:#ffffff"></div>
<div class="a" style="left:47px;top:342px;width:1290px;height:21px;background:#ffffff"></div>
<div class="a" style="left:46px;top:342px;width:1px;height:21px;background:#d0d3d7"></div>
<div class="a" style="left:84px;top:342px;width:1px;height:21px;background:#d0d3d7"></div>
<div class="a" style="left:154px;top:342px;width:1px;height:21px;background:#d0d3d7"></div>
<div class="a" style="left:244px;top:342px;width:1px;height:21px;background:#d0d3d7"></div>
<div class="a" style="left:344px;top:342px;width:1px;height:21px;background:#d0d3d7"></div>
<div class="a" style="left:744px;top:342px;width:1px;height:21px;background:#d0d3d7"></div>
<div class="a" style="left:891px;top:342px;width:1px;height:21px;background:#d0d3d7"></div>
<div class="a" style="left:1038px;top:342px;width:1px;height:21px;background:#d0d3d7"></div>
<div class="a" style="left:1158px;top:342px;width:1px;height:21px;background:#d0d3d7"></div>
<div class="a" style="left:1308px;top:342px;width:1px;height:21px;background:#d0d3d7"></div>
<div class="cb" style="left:20px;top:346px"></div>
<svg class="a" style="left:50px;top:350px" width="8" height="7" viewBox="0 0 8 7"><path d="M1.2 0.9 L6.8 6.1 M6.8 0.9 L1.2 6.1" stroke="#cc1531" stroke-width="2.1"/></svg>
<svg class="a" style="left:62px;top:344px;opacity:1" width="17" height="15" viewBox="0 0 17 15"><path d="M6.03 12.81 L15.57 3.27 L13.03 0.73 L3.49 10.27 Z" fill="#f2a243" stroke="#e0852a" stroke-width="0.7"/><path d="M2.5 13.8 L6.03 12.81 L3.49 10.27 Z" fill="#f8e6c6"/><circle cx="2.7" cy="13.6" r="0.9" fill="#333"/></svg>
<div class="t" style="left:91.50px;top:345.00px;font-size:11.5px;line-height:14px;color:#333;letter-spacing:0.700px">13/03/24</div>
<div class="t" style="left:162.00px;top:345.00px;font-size:11.5px;line-height:14px;color:#333;letter-spacing:0.220px">Título</div>
<div class="t" style="left:251.30px;top:345.00px;font-size:11.5px;line-height:14px;color:#333;letter-spacing:0.417px">Emitido</div>
<div class="t" style="left:352.00px;top:345.00px;font-size:11.5px;line-height:14px;color:#333;letter-spacing:0.000px;transform:scaleX(0.8520);transform-origin:0 0">ACO</div>
<div class="t" style="left:378.05px;top:345.00px;font-size:11.5px;line-height:14px;color:#333;letter-spacing:0.000px;transform:scaleX(0.9533);transform-origin:0 0">ENGENHARIA</div>
<div class="t" style="left:453.60px;top:345.00px;font-size:11.5px;line-height:14px;color:#333;letter-spacing:0.500px">ref.</div>
<div class="t" style="left:475.80px;top:345.00px;font-size:11.5px;line-height:14px;color:#333;letter-spacing:0.400px">NF</div>
<div class="t" style="left:493.70px;top:345.00px;font-size:11.5px;line-height:14px;color:#333;letter-spacing:0.600px">nº</div>
<div class="t" style="left:509.80px;top:345.00px;font-size:11.5px;line-height:14px;color:#333;letter-spacing:0.429px">10000075</div>
<div class="t" style="left:567.80px;top:345.00px;font-size:11.5px;line-height:14px;color:#333;letter-spacing:0.325px">parc.</div>
<div class="t" style="left:599.00px;top:345.00px;font-size:11.5px;line-height:14px;color:#333;letter-spacing:1.350px">2/2</div>
<div class="t" style="left:750.50px;top:345.00px;font-size:11.5px;line-height:14px;color:#555;letter-spacing:0.410px;text-decoration:underline">NF 10000075</div>
<div class="t" style="left:1093.70px;top:345.00px;font-size:11.5px;line-height:14px;color:#333;letter-spacing:0.500px">124,40</div>
<svg class="a" style="left:1136px;top:347px" width="14" height="13" viewBox="0 0 14 13"><path d="M0.8 6.8 L4.5 11.4 L13.2 0.6" fill="none" stroke="#d2d2d2" stroke-width="1.8"/></svg>
<svg class="a" style="left:1168px;top:346px" width="16" height="14"><rect x="0" y="0" width="1" height="14" fill="#b4b4b4"/><rect x="2" y="0" width="2" height="14" fill="#b4b4b4"/><rect x="5" y="0" width="1" height="14" fill="#b4b4b4"/><rect x="7" y="0" width="3" height="14" fill="#b4b4b4"/><rect x="11" y="0" width="1" height="14" fill="#b4b4b4"/><rect x="13" y="0" width="1" height="14" fill="#b4b4b4"/><rect x="15" y="0" width="1" height="14" fill="#b4b4b4"/></svg>
<div class="a" style="left:8px;top:363px;width:38px;height:22px;background:#f0f1f3"></div>
<div class="a" style="left:47px;top:363px;width:1290px;height:22px;background:#f0f1f3"></div>
<div class="a" style="left:46px;top:363px;width:1px;height:22px;background:#d0d3d7"></div>
<div class="a" style="left:84px;top:363px;width:1px;height:22px;background:#d0d3d7"></div>
<div class="a" style="left:154px;top:363px;width:1px;height:22px;background:#d0d3d7"></div>
<div class="a" style="left:244px;top:363px;width:1px;height:22px;background:#d0d3d7"></div>
<div class="a" style="left:344px;top:363px;width:1px;height:22px;background:#d0d3d7"></div>
<div class="a" style="left:744px;top:363px;width:1px;height:22px;background:#d0d3d7"></div>
<div class="a" style="left:891px;top:363px;width:1px;height:22px;background:#d0d3d7"></div>
<div class="a" style="left:1038px;top:363px;width:1px;height:22px;background:#d0d3d7"></div>
<div class="a" style="left:1158px;top:363px;width:1px;height:22px;background:#d0d3d7"></div>
<div class="a" style="left:1308px;top:363px;width:1px;height:22px;background:#d0d3d7"></div>
<div class="cb" style="left:20px;top:367px"></div>
<svg class="a" style="left:50px;top:372px" width="8" height="7" viewBox="0 0 8 7"><path d="M1.2 0.9 L6.8 6.1 M6.8 0.9 L1.2 6.1" stroke="#cc1531" stroke-width="2.1"/></svg>
<svg class="a" style="left:62px;top:366px;opacity:1" width="17" height="15" viewBox="0 0 17 15"><path d="M6.03 12.81 L15.57 3.27 L13.03 0.73 L3.49 10.27 Z" fill="#f2a243" stroke="#e0852a" stroke-width="0.7"/><path d="M2.5 13.8 L6.03 12.81 L3.49 10.27 Z" fill="#f8e6c6"/><circle cx="2.7" cy="13.6" r="0.9" fill="#333"/></svg>
<div class="t" style="left:91.50px;top:367.00px;font-size:11.5px;line-height:14px;color:#333;letter-spacing:0.700px">13/03/24</div>
<div class="t" style="left:162.00px;top:367.00px;font-size:11.5px;line-height:14px;color:#333;letter-spacing:0.220px">Título</div>
<div class="t" style="left:251.30px;top:367.00px;font-size:11.5px;line-height:14px;color:#333;letter-spacing:0.417px">Emitido</div>
<div class="t" style="left:352.00px;top:367.00px;font-size:11.5px;line-height:14px;color:#333;letter-spacing:0.000px;transform:scaleX(0.8520);transform-origin:0 0">ACO</div>
<div class="t" style="left:378.05px;top:367.00px;font-size:11.5px;line-height:14px;color:#333;letter-spacing:0.000px;transform:scaleX(0.9533);transform-origin:0 0">ENGENHARIA</div>
<div class="t" style="left:453.60px;top:367.00px;font-size:11.5px;line-height:14px;color:#333;letter-spacing:0.500px">ref.</div>
<div class="t" style="left:475.80px;top:367.00px;font-size:11.5px;line-height:14px;color:#333;letter-spacing:0.400px">NF</div>
<div class="t" style="left:493.70px;top:367.00px;font-size:11.5px;line-height:14px;color:#333;letter-spacing:0.600px">nº</div>
<div class="t" style="left:509.80px;top:367.00px;font-size:11.5px;line-height:14px;color:#333;letter-spacing:0.429px">10000074</div>
<div class="t" style="left:567.80px;top:367.00px;font-size:11.5px;line-height:14px;color:#333;letter-spacing:0.325px">parc.</div>
<div class="t" style="left:599.00px;top:367.00px;font-size:11.5px;line-height:14px;color:#333;letter-spacing:1.350px">2/2</div>
<div class="t" style="left:750.50px;top:367.00px;font-size:11.5px;line-height:14px;color:#555;letter-spacing:0.310px;text-decoration:underline">NF 10000074</div>
<div class="t" style="left:1093.70px;top:367.00px;font-size:11.5px;line-height:14px;color:#333;letter-spacing:0.500px">122,40</div>
<svg class="a" style="left:1136px;top:369px" width="14" height="13" viewBox="0 0 14 13"><path d="M0.8 6.8 L4.5 11.4 L13.2 0.6" fill="none" stroke="#d2d2d2" stroke-width="1.8"/></svg>
<svg class="a" style="left:1168px;top:367px" width="16" height="14"><rect x="0" y="0" width="1" height="14" fill="#b4b4b4"/><rect x="2" y="0" width="2" height="14" fill="#b4b4b4"/><rect x="5" y="0" width="1" height="14" fill="#b4b4b4"/><rect x="7" y="0" width="3" height="14" fill="#b4b4b4"/><rect x="11" y="0" width="1" height="14" fill="#b4b4b4"/><rect x="13" y="0" width="1" height="14" fill="#b4b4b4"/><rect x="15" y="0" width="1" height="14" fill="#b4b4b4"/></svg>
<div class="a" style="left:1337px;top:256px;width:17px;height:336px;background:#f0f0f0"></div>
<div class="a" style="left:1341px;top:262px;width:0;height:0;border-left:4px solid transparent;border-right:4px solid transparent;border-bottom:5px solid #a3a3a3"></div>
<div class="a" style="left:1341px;top:581px;width:0;height:0;border-left:4px solid transparent;border-right:4px solid transparent;border-top:5px solid #a3a3a3"></div>
<div class="a" style="left:8px;top:592px;width:1329px;height:17px;background:#f0f0f0"></div>
<div class="a" style="left:25px;top:594px;width:1037px;height:13px;background:#c1c1c1"></div>
<div class="a" style="left:14px;top:597px;width:0;height:0;border-top:4px solid transparent;border-bottom:4px solid transparent;border-right:5px solid #a3a3a3"></div>
<div class="a" style="left:1327px;top:597px;width:0;height:0;border-top:4px solid transparent;border-bottom:4px solid transparent;border-left:5px solid #505050"></div>
<div class="a" style="left:1337px;top:592px;width:17px;height:17px;background:#dcdcdc"></div>
<div class="a" style="left:8px;top:609px;width:1346px;height:23px;background:#c0c0c0;border-top:1px solid #9ca4ab;border-bottom:1px solid #9ca4ab"></div>
<div class="a" style="left:46px;top:610px;width:1px;height:21px;background:#e4e4e8"></div>
<div class="a" style="left:84px;top:610px;width:1px;height:21px;background:#e4e4e8"></div>
<div class="a" style="left:154px;top:610px;width:1px;height:21px;background:#e4e4e8"></div>
<div class="a" style="left:244px;top:610px;width:1px;height:21px;background:#e4e4e8"></div>
<div class="a" style="left:344px;top:610px;width:1px;height:21px;background:#e4e4e8"></div>
<div class="a" style="left:744px;top:610px;width:1px;height:21px;background:#e4e4e8"></div>
<div class="a" style="left:891px;top:610px;width:1px;height:21px;background:#e4e4e8"></div>
<div class="a" style="left:1038px;top:610px;width:1px;height:21px;background:#e4e4e8"></div>
<div class="a" style="left:1158px;top:610px;width:1px;height:21px;background:#e4e4e8"></div>
<div class="a" style="left:1308px;top:610px;width:1px;height:21px;background:#e4e4e8"></div>
<div class="a" style="left:1337px;top:610px;width:17px;height:21px;background:#f0f1f3;border-left:1px solid #9ca4ab"></div>
<div class="t" style="left:15.20px;top:614.00px;font-size:11.5px;line-height:14px;color:#333;letter-spacing:0.333px">Totais:</div>
<div class="t" style="left:1096.60px;top:614.00px;font-size:11.5px;line-height:14px;color:#333;letter-spacing:0.400px">10.097,60</div>
</body></html>
